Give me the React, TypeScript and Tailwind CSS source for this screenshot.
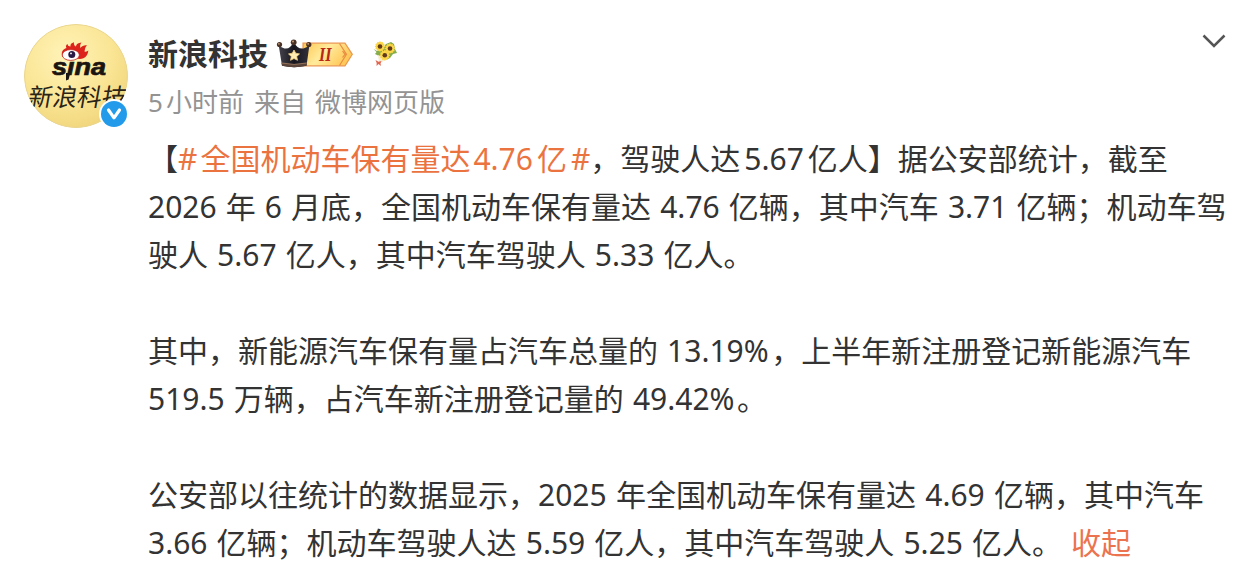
type Segment = {
  text: string
  className?: string
}

type Line = {
  className?: string
  segments: Segment[]
}

const paragraphs: Line[][] = [
  [
    {
      segments: [
        { text: '【' },
        { text: '#', className: 'text-[#eb7340] mr-[3px]' },
        { text: '全国机动车保有量达', className: 'text-[#eb7340] mr-[3px]' },
        { text: '4.76', className: 'text-[#eb7340] mr-1' },
        { text: '亿', className: 'text-[#eb7340] mr-1' },
        { text: '#', className: 'text-[#eb7340]' },
        { text: '，驾驶人达', className: 'mr-1' },
        { text: '5.67', className: 'mr-1' },
        { text: '亿人】据公安部统计，截至' },
      ],
    },
    {
      className: '[word-spacing:1.3px]',
      segments: [{ text: '2026 年 6 月底，全国机动车保有量达 4.76 亿辆，其中汽车 3.71 亿辆；机动车驾' }],
    },
    {
      className: '[word-spacing:1.3px]',
      segments: [{ text: '驶人 5.67 亿人，其中汽车驾驶人 5.33 亿人。' }],
    },
  ],
  [
    {
      className: '[word-spacing:1.3px]',
      segments: [
        { text: '其中，新能源汽车保有量占汽车总量的 13.19%', className: 'mr-[2.5px]' },
        { text: '，上半年新注册登记新能源汽车' },
      ],
    },
    {
      className: '[word-spacing:1.3px]',
      segments: [
        { text: '519.5 万辆，占汽车新注册登记量的 49.42%', className: 'mr-[2.5px]' },
        { text: '。' },
      ],
    },
  ],
  [
    {
      className: '[word-spacing:1.5px]',
      segments: [{ text: '公安部以往统计的数据显示，2025 年全国机动车保有量达 4.69 亿辆，其中汽车' }],
    },
    {
      className: '[word-spacing:1.3px]',
      segments: [
        { text: '3.66 亿辆；机动车驾驶人达 5.59 亿人，其中汽车驾驶人 5.25 亿人。' },
        { text: '收起', className: 'text-[#eb7350] ml-[9px] cursor-pointer' },
      ],
    },
  ],
]

function Avatar() {
  return (
    <div className="relative size-[104px] shrink-0">
      <svg viewBox="0 0 104 104" className="size-full">
        <defs>
          <radialGradient id="avatarBg" cx="0.4" cy="0.3" r="0.75">
            <stop offset="0" stopColor="#fff3b8" />
            <stop offset="0.6" stopColor="#fae594" />
            <stop offset="1" stopColor="#f0d47a" />
          </radialGradient>
          <clipPath id="avatarClip">
            <circle cx="52" cy="52" r="52" />
          </clipPath>
        </defs>
        <g clipPath="url(#avatarClip)">
          <circle cx="52" cy="52" r="52" fill="url(#avatarBg)" />
          <circle cx="52" cy="52" r="51.5" fill="none" stroke="#e9d695" />
          {/* flames over the eye */}
          <path
            d="M38.5 33 C36.5 28 39 25 42.5 24 C41.5 22.5 42 21 43.5 20 C43.8 21.8 45 22.5 46.5 22.5 C46 20.5 47.5 19 50 18.3 C49.5 20.5 50.5 22 52 22.5 C52 20.5 54 18.6 57.5 18.5 C55.8 20.5 56 22.5 56.5 24 C58 22 60 21 63 21.3 C61 23 61 25.500 60.500 27.500 C62 28 63.300 27.500 64.300 26.500 C64 31.500 61 34.500 56 35 Z"
            fill="#dc231c"
          />
          <ellipse cx="46.8" cy="31" rx="8.6" ry="5.4" fill="#fff" stroke="#c7211c" strokeWidth="0.8" />
          <circle cx="47.8" cy="30.4" r="3.5" fill="#2b1a45" />
          <circle cx="47" cy="29.4" r="0.9" fill="#fff" />
          <text
            x="28"
            y="50.5"
            textLength="54"
            lengthAdjust="spacingAndGlyphs"
            fill="#1b1512"
            stroke="#1b1512"
            strokeWidth="0.7"
            className="font-['Liberation_Sans'] text-[23px] font-bold italic"
          >
            sına
          </text>
          <path d="M42 49 L46.300 49 L44.600 55.500 L42 56.500 Z" fill="#1b1512" />
          <text
            transform="translate(3 82) skewX(-10)"
            textLength="98"
            lengthAdjust="spacing"
            fill="#2a2316"
            className="font-['Noto_Sans_CJK_SC',sans-serif] text-[24.5px]"
          >
            新浪科技
          </text>
        </g>
      </svg>
      <svg viewBox="0 0 30 30" className="absolute -right-px -bottom-px size-[30px]">
        <circle cx="15" cy="15" r="15" fill="#fff" />
        <circle cx="15" cy="15" r="13" fill="#239bea" />
        <path d="M9.5 11 L15 18.8 L20.500 11" fill="none" stroke="#fff" strokeWidth="3.2" strokeLinecap="round" strokeLinejoin="round" />
      </svg>
    </div>
  )
}

function VipBadge() {
  return (
    <svg viewBox="0 0 78 30" className="h-[30px] w-[78px]">
      <defs>
        <linearGradient id="vipGold" x1="0" y1="0" x2="1" y2="0.4">
          <stop offset="0" stopColor="#ffc64f" />
          <stop offset="0.5" stopColor="#ffeb9d" />
          <stop offset="1" stopColor="#ffc95a" />
        </linearGradient>
        <linearGradient id="vipCrown" x1="0" y1="0" x2="1" y2="0">
          <stop offset="0" stopColor="#45424c" />
          <stop offset="0.5" stopColor="#17161f" />
          <stop offset="1" stopColor="#33303a" />
        </linearGradient>
      </defs>
      <path d="M27 4.200 H69 L76.300 15.300 L69 26.800 H27 Z" fill="url(#vipGold)" stroke="#eb9850" strokeWidth="1.2" />
      <path d="M63.500 4.500 L70.500 15.300 L63.500 26.500 M66.500 12 L69 15.300 L66.500 18.500" fill="none" stroke="#e98e43" strokeWidth="1.2" />
      <text x="43" y="21.500" fill="#b92716" textLength="12.5" lengthAdjust="spacingAndGlyphs" className="font-['Liberation_Serif'] text-[19px] font-bold italic">
        II
      </text>
      <path d="M2.800 7 L8.500 9.500 Q12 10 14 8 L17.700 4 L21.500 8 Q24 10 27.500 9.500 L33.300 7 L30.500 26.800 Q18 29.500 6 26.800 Z" fill="url(#vipCrown)" />
      <path d="M5.500 23.800 Q18 26.600 30.900 23.800 L30.500 26.800 Q18 29.500 6 26.800 Z" fill="#5b4439" />
      <path d="M5.700 24 Q18 26.800 30.700 24" fill="none" stroke="#b48c68" strokeWidth="0.7" />
      <circle cx="3.500" cy="5.500" r="2.600" fill="#493126" />
      <circle cx="17.700" cy="3.300" r="2.900" fill="#493126" />
      <circle cx="32.800" cy="5.500" r="2.600" fill="#493126" />
      <circle cx="2.900" cy="4.800" r="0.900" fill="#c49b76" />
      <circle cx="17" cy="2.500" r="1" fill="#c49b76" />
      <circle cx="32.200" cy="4.800" r="0.900" fill="#c49b76" />
      <path d="M18 11 L19.700 14.200 L23.500 14.900 L20.700 17.500 L21.500 21.300 L18 19.500 L14.500 21.300 L15.300 17.500 L12.500 14.900 L16.300 14.200 Z" fill="#ffedb0" stroke="#f3d183" strokeWidth="0.8" strokeLinejoin="round" />
    </svg>
  )
}

function Sunflower({ x, y }: { x: number; y: number }) {
  return (
    <g transform={`translate(${x} ${y})`}>
      <circle r="4.2" fill="#f3bf2a" />
      {[0, 30, 60, 90, 120, 150].map((angle) => (
        <ellipse key={angle} rx="5.200" ry="1.300" fill="#fbd648" transform={`rotate(${angle})`} />
      ))}
      <circle r="2.300" fill="#5f3a1c" />
    </g>
  )
}

function Bouquet() {
  return (
    <svg viewBox="0 0 26 28" className="h-7 w-[26px]">
      <path d="M1.500 9 L5 11 L9 10 L14 4 L19 2 L22 4 L23 9 L25 13 L21 14 L18 18 L14 20 L9 20 L7 16 L3 14 L4.500 12 Z" fill="#86ad4c" />
      <path d="M6 15 L16 19.500 L7 23 Z" fill="#f6ecd2" />
      <Sunflower x={8} y={6.500} />
      <Sunflower x={18} y={8.500} />
      <Sunflower x={12.800} y={15.300} />
      <path d="M3.500 20 L6.500 21.700 L9.500 21 L8.500 23.500 L9 26 L6.500 24 L4.500 26 L4.700 23 Z" fill="#e0664f" />
    </svg>
  )
}

export default function App() {
  return (
    <article className="flex h-[570px] w-[1247px] gap-5 overflow-hidden bg-white pt-6 pl-6 font-['Noto_Sans','Noto_Sans_CJK_SC',sans-serif] text-[#333]">
      <Avatar />
      <div className="min-w-0 flex-1">
        <header className="flex h-[111px] justify-between">
          <div className="pt-2">
            <div className="flex h-11 items-center">
              <h1 className="text-[30px] leading-[44px] font-bold">新浪科技</h1>
              <span className="ml-2 flex">
                <VipBadge />
              </span>
              <span className="ml-[18px] flex">
                <Bouquet />
              </span>
            </div>
            <div className="flex h-[52px] items-center text-[26px] whitespace-pre text-[#939393]">
              <span className="mr-[3px]">5</span>
              <span className="mr-[10px]">小时前</span>
              <span className="mr-[9px]">来自</span>
              <span>微博网页版</span>
            </div>
          </div>
          <svg viewBox="0 0 24 14" className="mt-[10px] mr-[21px] h-[14px] w-6">
            <path d="M1.500 1.500 L12 12 L22.500 1.500" fill="none" stroke="#555" strokeWidth="2.500" />
          </svg>
        </header>

        <div className="space-y-12 text-[30px] leading-[48px]">
          {paragraphs.map((lines, i) => (
            <div key={i}>
              {lines.map((line, j) => (
                <p key={j} className={`h-12 whitespace-pre ${line.className ?? ''}`}>
                  {line.segments.map((segment, k) => (
                    <span key={k} className={segment.className}>{segment.text}</span>
                  ))}
                </p>
              ))}
            </div>
          ))}
        </div>
      </div>
    </article>
  )
}
